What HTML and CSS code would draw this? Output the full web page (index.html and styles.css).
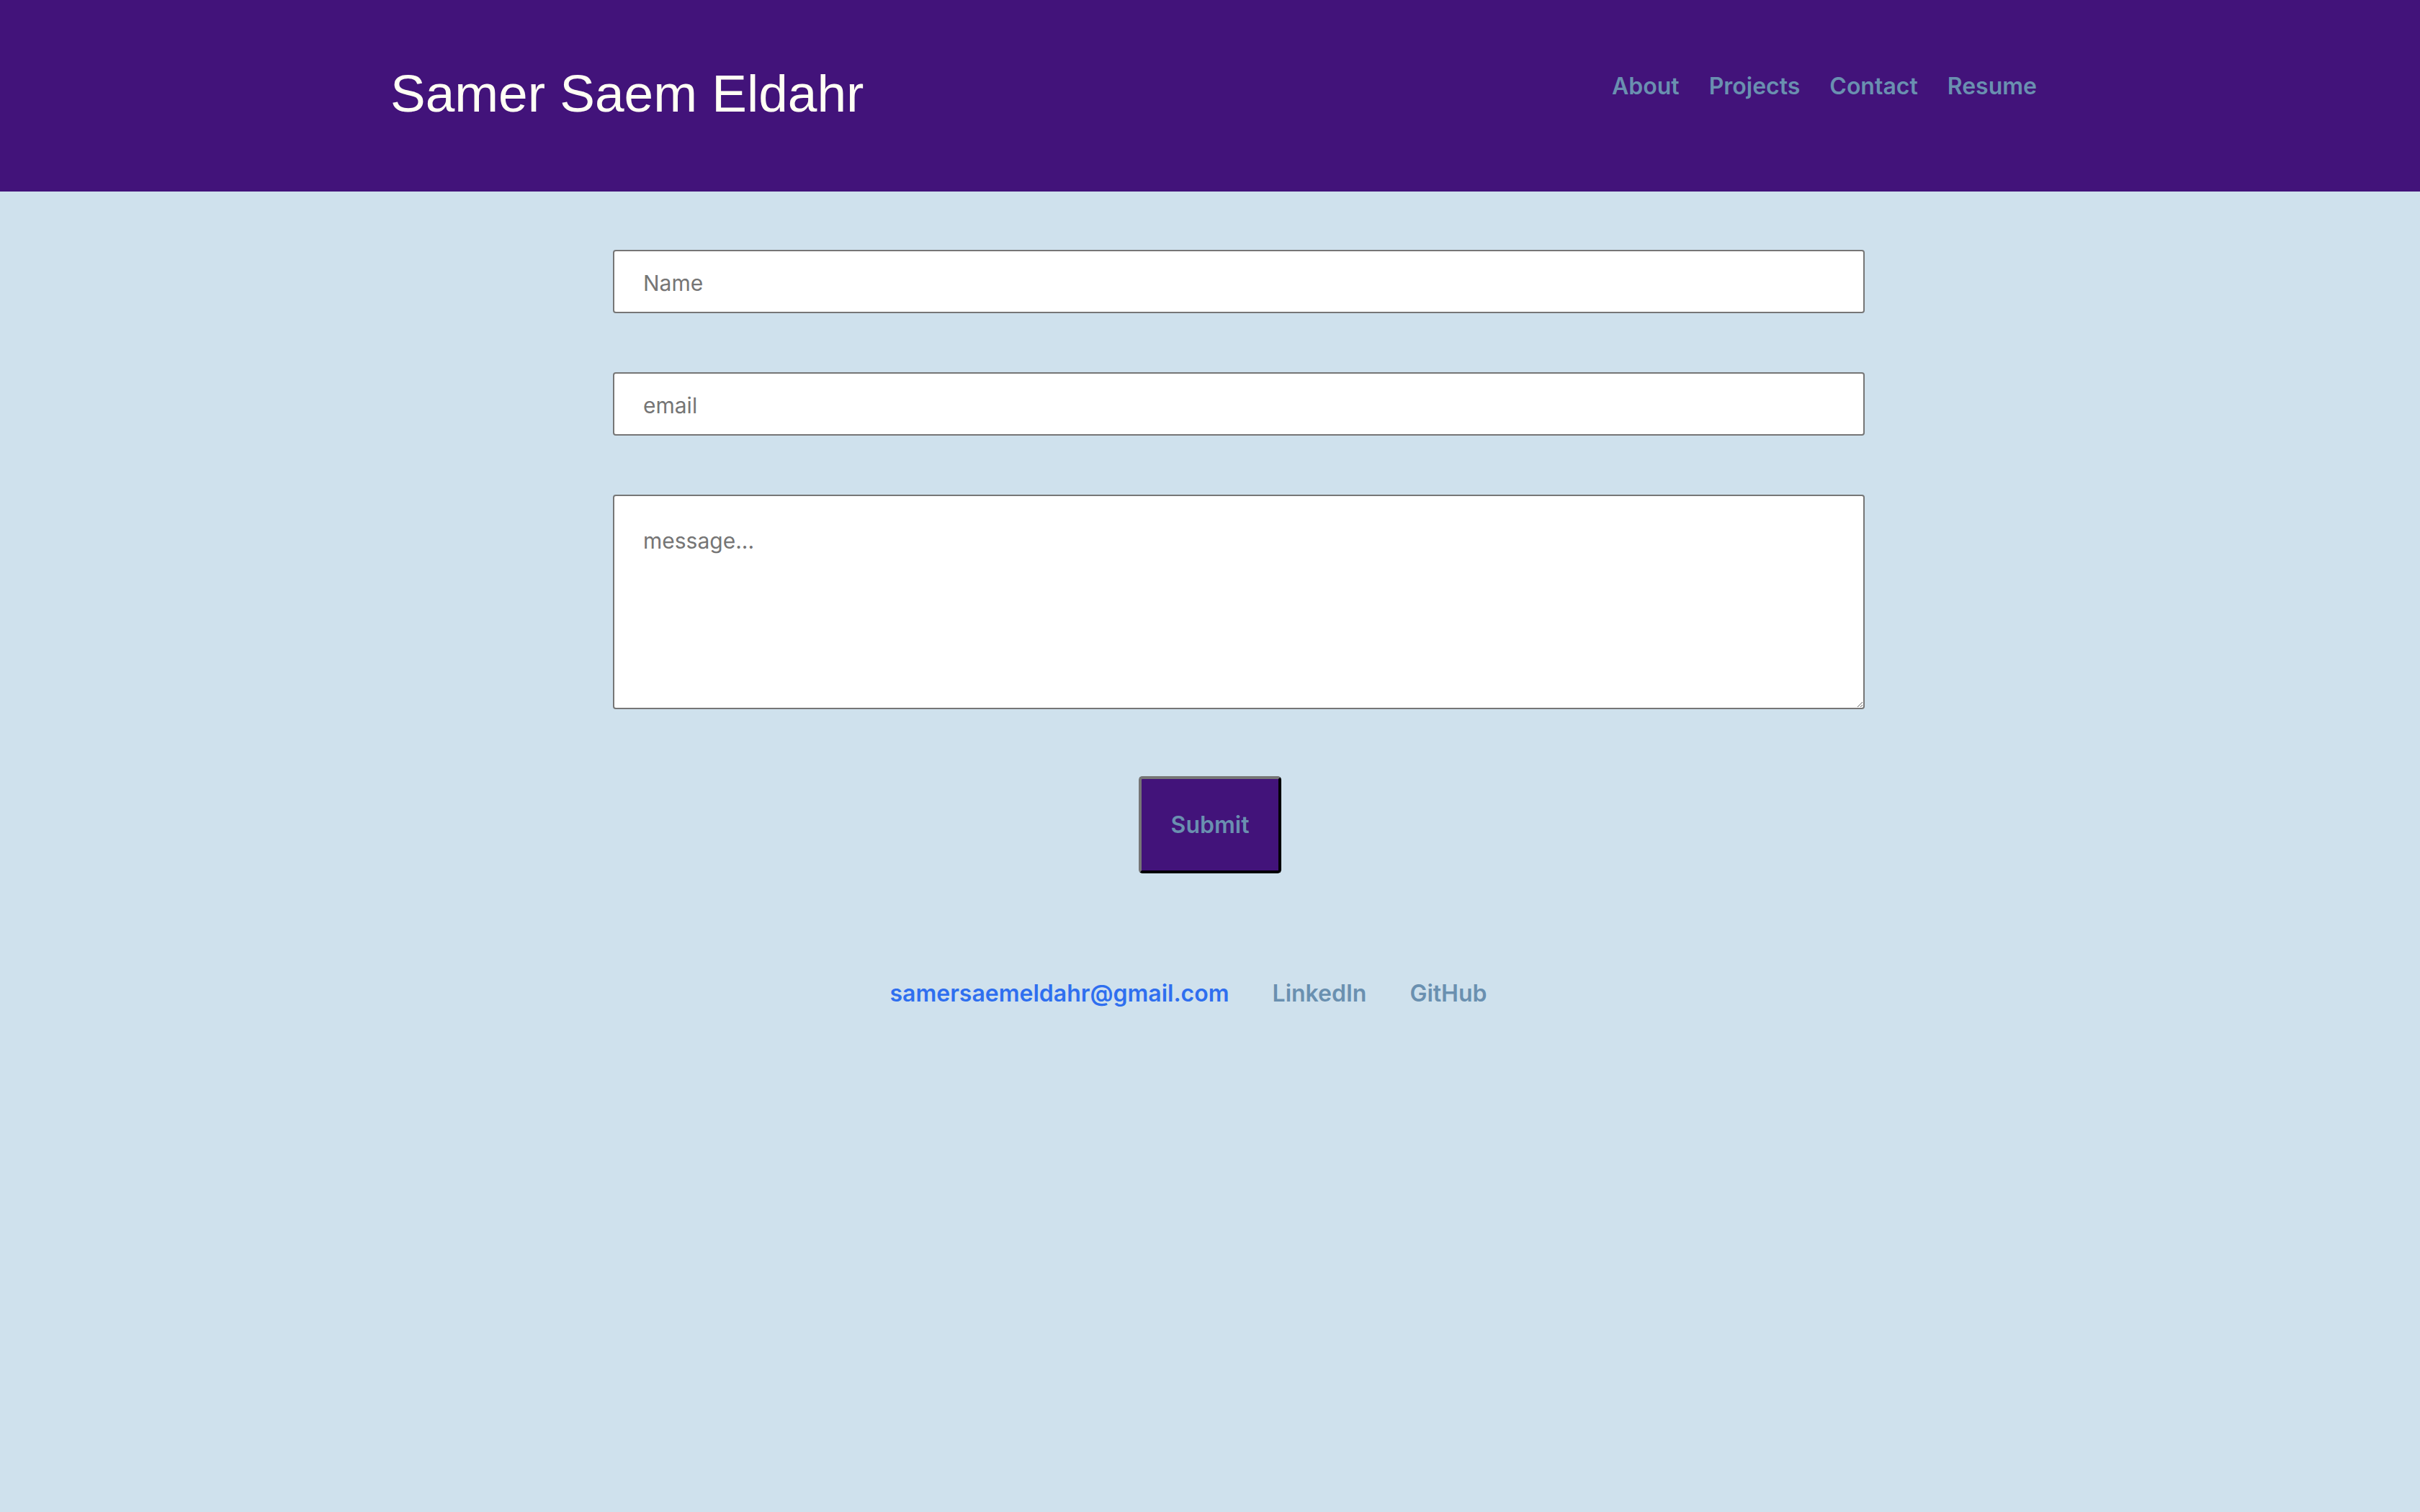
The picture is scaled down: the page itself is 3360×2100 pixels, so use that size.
FILE: index.html
```html
<!DOCTYPE html>
<html lang="en">
<head>
<meta charset="utf-8">
<title>Samer Saem Eldahr</title>
<link rel="stylesheet" href="styles.css">
</head>
<body>
<header class="site-header">
  <h1 class="site-title">Samer Saem Eldahr</h1>
  <nav class="site-nav">
    <a href="#about">About</a>
    <a href="#projects">Projects</a>
    <a href="#contact">Contact</a>
    <a href="#resume">Resume</a>
  </nav>
</header>
<main class="contact">
  <form class="contact-form">
    <div class="fields">
      <input class="field" type="text" placeholder="Name">
      <input class="field" type="email" placeholder="email">
      <textarea class="field message" placeholder="message..."></textarea>
    </div>
    <div class="actions">
      <button class="submit" type="button">Submit</button>
    </div>
  </form>
  <footer class="links">
    <a class="mail" href="#">samersaemeldahr@gmail.com</a>
    <a href="#">LinkedIn</a>
    <a href="#">GitHub</a>
  </footer>
</main>
</body>
</html>
```
FILE: styles.css
```css
html, body {
  margin: 0;
  padding: 0;
  background: #cfe1ed;
  min-height: 100%;
}

body {
  font-family: Inter, "Noto Sans", sans-serif;
}

.site-header {
  background: #42137a;
  height: 266px;
  box-sizing: border-box;
  padding: 0 532px 0 542px;
  display: flex;
  justify-content: space-between;
  align-items: flex-start;
}

.site-title {
  margin: 90px 0 0;
  font-family: "Liberation Sans", Arial, sans-serif;
  font-weight: 400;
  font-size: 73px;
  line-height: 80px;
  color: #fffff4;
}

.site-nav {
  margin-top: 100px;
  display: flex;
  gap: 41px;
}

.site-nav a {
  font-size: 32px;
  line-height: 40px;
  font-weight: 600;
  color: #6a90b0;
  text-decoration: none;
}

.contact {
  padding-top: 81px;
}

.fields {
  width: 1738px;
  margin: 0 auto;
  padding-left: 80px;
  display: flex;
  flex-direction: column;
  gap: 82px;
}

.field {
  display: block;
  box-sizing: border-box;
  width: 1738px;
  height: 88px;
  margin: 0;
  padding: 4px 40px 0;
  border: 2px solid #767676;
  border-radius: 4px;
  background: #fff;
  font-family: Inter, "Noto Sans", sans-serif;
  font-size: 30px;
  color: #333;
  outline: none;
}

.field::placeholder {
  color: #757575;
  opacity: 1;
}

.message {
  height: 298px;
  padding: 44px 40px;
  resize: vertical;
}

.actions {
  display: flex;
  justify-content: center;
  margin-top: 93px;
}

.submit {
  box-sizing: border-box;
  width: 198px;
  height: 135px;
  background: #42137a;
  border: 4px outset #767676;
  border-right-color: #222;
  border-bottom-color: #222;
  border-radius: 5px;
  font-family: Inter, "Noto Sans", sans-serif;
  font-size: 32px;
  font-weight: 600;
  color: #6a90b0;
  padding: 0;
}

.links {
  display: flex;
  justify-content: center;
  margin-top: 147px;
  padding-right: 60px;
}

.links a {
  font-size: 32px;
  line-height: 40px;
  font-weight: 600;
  color: #6a90b0;
  text-decoration: none;
  margin-right: 60px;
}

.links a:last-child {
  margin-right: 0;
}

.links a.mail {
  color: #2f6fef;
}
```
